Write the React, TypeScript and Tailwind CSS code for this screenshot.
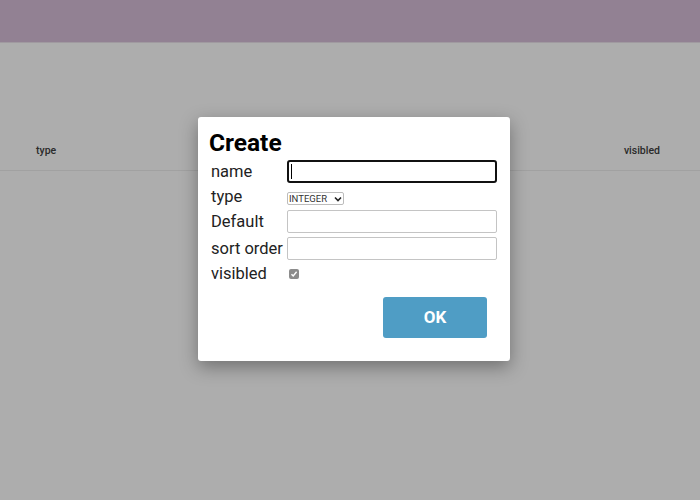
import React from "react";

const font = { fontFamily: "Roboto, 'Noto Sans', sans-serif" };

function Field({ label, children }: { label: string; children: React.ReactNode }) {
  return (
    <>
      <div className="text-[16.5px] leading-[19px] text-[#222]">{label}</div>
      {children}
    </>
  );
}

export default function App() {
  return (
    <div className="relative h-[500px] w-[700px] overflow-hidden bg-[#adadad]" style={font}>
      <header className="h-[43px] border-b border-[#a09aa0] bg-[#928193]" />

      <div className="mt-[89px] flex h-[39px] items-center justify-between border-b border-[#a1a1a1] pl-[36px] pr-[40px] text-[10.5px] font-medium text-[#2a2a2a]">
        <span>type</span>
        <span>visibled</span>
      </div>

      <div className="absolute left-[198px] top-[117px] w-[312px] rounded-[3px] bg-white px-[11px] pb-[23px] pt-[12px] shadow-[0_6px_18px_rgba(0,0,0,0.35)]">
        <h2 className="text-[24.5px] font-bold leading-[28px] text-black">Create</h2>
        <div className="mt-[3px] grid grid-cols-[76px_210px] items-center gap-y-[4px] pl-[2px]">
          <Field label="name">
            <div className="h-[23px] w-[210px] rounded-[3px] border-2 border-[#111] bg-white">
              <div className="ml-[2px] mt-[2px] h-[15px] w-px bg-black" />
            </div>
          </Field>
          <Field label="type">
            <div className="mb-[1px] flex h-[13px] w-[57px] items-center justify-between self-end rounded-[2px] border border-[#bcbcbc] bg-white px-[1px] text-[9.5px] leading-none text-[#333]">
              <span>INTEGER</span>
              <svg width="8" height="6" viewBox="0 0 8 6">
                <path d="M1 1.5 L4 4.5 L7 1.5" fill="none" stroke="#222" strokeWidth="1.6" />
              </svg>
            </div>
          </Field>
          <Field label="Default">
            <div className="h-[23px] w-[210px] rounded-[2px] border border-[#c4c4c4] bg-white" />
          </Field>
          <Field label="sort order">
            <div className="h-[23px] w-[210px] rounded-[2px] border border-[#c4c4c4] bg-white" />
          </Field>
          <Field label="visibled">
            <div className="ml-[2px] flex h-[10px] w-[10px] items-center justify-center rounded-[2px] bg-[#8c8c8c]">
              <svg width="8" height="8" viewBox="0 0 8 8">
                <path d="M1.5 4.2 L3.2 6 L6.6 1.8" fill="none" stroke="#fff" strokeWidth="1.4" />
              </svg>
            </div>
          </Field>
        </div>
        <div className="mt-[14px] flex justify-end pr-[12px]">
          <button className="h-[41px] w-[104px] rounded-[3px] bg-[#4f9dc5] text-[17px] font-bold text-white">
            OK
          </button>
        </div>
      </div>
    </div>
  );
}
